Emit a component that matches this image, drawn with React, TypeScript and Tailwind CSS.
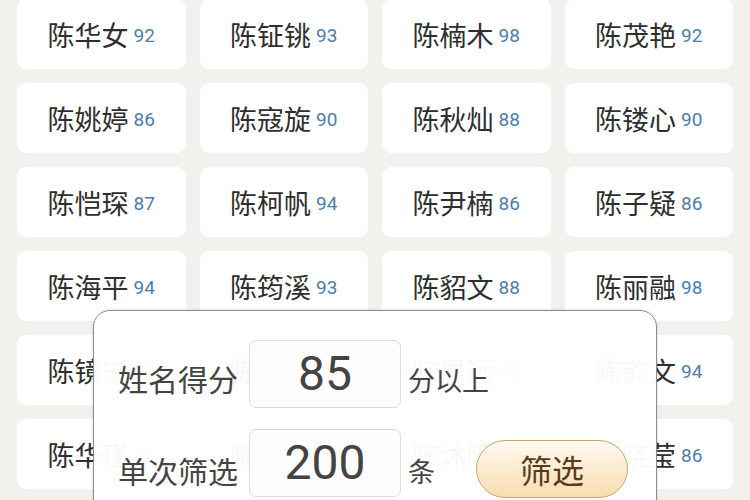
const names: [string, number][] = [
  ['陈华女', 92],
  ['陈钲铫', 93],
  ['陈楠木', 98],
  ['陈茂艳', 92],
  ['陈姚婷', 86],
  ['陈寇旋', 90],
  ['陈秋灿', 88],
  ['陈镂心', 90],
  ['陈恺琛', 87],
  ['陈柯帆', 94],
  ['陈尹楠', 86],
  ['陈子疑', 86],
  ['陈海平', 94],
  ['陈筠溪', 93],
  ['陈貂文', 88],
  ['陈丽融', 98],
  ['陈镜宁', 90],
  ['陈语桐', 92],
  ['陈思远', 88],
  ['陈韵文', 94],
  ['陈华瑾', 91],
  ['陈若汐', 89],
  ['陈沐阳', 87],
  ['陈晓莹', 86],
];

function NameCard({ name, score }: { name: string; score: number }) {
  return (
    <div className="h-[70px] bg-white rounded-[9px] flex items-center justify-center gap-[5px]">
      <span className="text-[27px] text-[#2e2e2e] leading-none">{name}</span>
      <span className="text-[19px] text-[#4d7ea8] leading-none font-['Roboto',sans-serif] pt-[2px]">
        {score}
      </span>
    </div>
  );
}

export default function App() {
  return (
    <div
      className="relative w-[750px] h-[500px] overflow-hidden bg-[#f3f1ed]"
      style={{ fontFamily: '"Noto Sans CJK SC", "Noto Sans", sans-serif' }}>
      <div className="grid grid-cols-4 gap-x-[14px] gap-y-[14px] px-[17px] -mt-[1px]">
        {names.map(([n, s]) => (
          <NameCard key={n} name={n} score={s} />
        ))}
      </div>

      {/* filter popup */}
      <div className="absolute left-[93px] top-[310px] w-[564px] h-[220px] rounded-[17px] border-[1.5px] border-[#8c8c8c] bg-white/[0.97] shadow-[0_0_3px_rgba(0,0,0,0.15)]">
        <div className="flex flex-col gap-[20px] pt-[29px] pl-[24px]">
          <div className="flex items-center">
            <span className="w-[131px] text-[30px] leading-none text-[#444] pt-[8px]">姓名得分</span>
            <div className="w-[152px] h-[68px] rounded-[7px] border border-[#dcdcdc] bg-[#fdfdfd] flex items-center justify-center text-[48px] text-[#444] font-['Roboto',sans-serif]">
              85
            </div>
            <span className="ml-[7px] text-[27px] leading-none text-[#444] pt-[10px]">分以上</span>
          </div>
          <div className="flex items-center">
            <span className="w-[131px] text-[30px] leading-none text-[#444] pt-[14px]">单次筛选</span>
            <div className="w-[152px] h-[68px] rounded-[7px] border border-[#dcdcdc] bg-[#fdfdfd] flex items-center justify-center text-[48px] text-[#444] font-['Roboto',sans-serif]">
              200
            </div>
            <span className="ml-[7px] text-[27px] leading-none text-[#444] pt-[14px]">条</span>
            <button className="ml-[41px] mt-[12px] w-[152px] h-[58px] rounded-full border-[1.5px] border-[#c9a56e] bg-gradient-to-b from-[#fffaf0] to-[#f9ddb0] text-[32px] leading-none text-[#5b3b1c] flex items-center justify-center">
              筛选
            </button>
          </div>
        </div>
      </div>
    </div>
  );
}
